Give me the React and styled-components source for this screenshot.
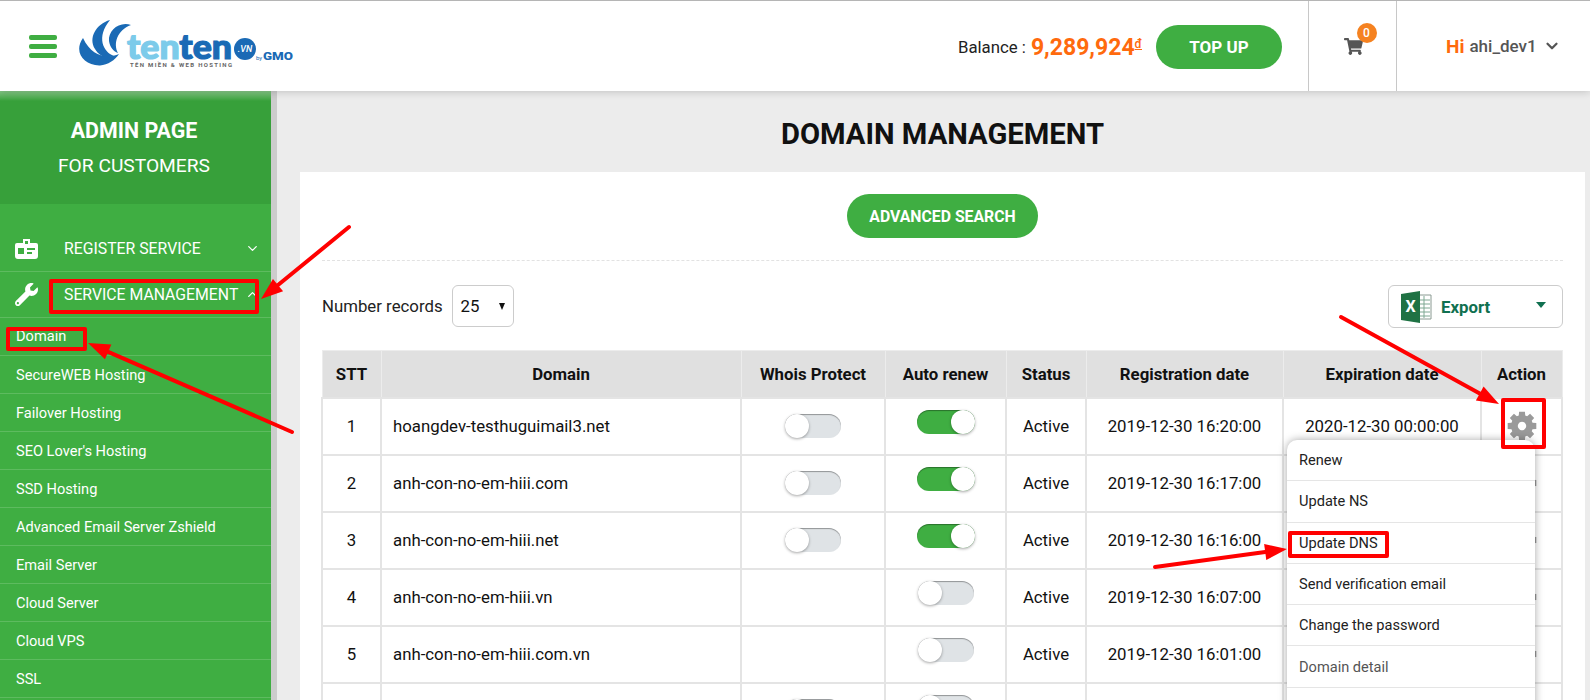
import React from "react";
import styled, { createGlobalStyle } from "styled-components";
import { FaShoppingCart, FaWrench } from "react-icons/fa";
import { FiChevronDown, FiChevronUp } from "react-icons/fi";

const Global = createGlobalStyle`
  html, body { margin: 0; padding: 0; }
  body { font-family: Roboto, "Liberation Sans", sans-serif; color: #111; background: #ececec; }
  * { box-sizing: border-box; }
`;

const Page = styled.div`
  position: relative;
  height: 700px;
  overflow: hidden;
  display: flex;
  flex-direction: column;
`;

/* top bar */
const Topbar = styled.header`
  height: 91px;
  flex: none;
  display: flex;
  align-items: stretch;
  background: #fff;
  border-top: 1px solid #b5b5b5;
  box-shadow: 0 1px 8px rgba(0, 0, 0, 0.18);
  position: relative;
  z-index: 2;
`;
const Burger = styled.div`
  display: flex;
  flex-direction: column;
  justify-content: center;
  gap: 4px;
  margin-left: 29px;
  width: 28px;
`;
const BurgerBar = styled.span`
  height: 5px;
  border-radius: 2px;
  background: #3fae42;
`;
const LogoWrap = styled.div`
  display: flex;
  align-items: center;
  margin-left: 22px;
  padding-bottom: 4px;
`;
const Balance = styled.div`
  margin-left: auto;
  padding-top: 2px;
  display: flex;
  align-items: center;
  font-size: 16.8px;
  color: #222;
`;
const Money = styled.span`
  color: #ff6a0d;
  font-weight: 700;
  font-size: 23px;
  margin-left: 5px;
`;
const Dong = styled.sup`
  color: #ff6a0d;
  font-size: 12px;
  font-weight: 500;
  text-decoration: underline;
  position: relative;
  top: -3px;
  line-height: 0;
`;
const TopUp = styled.button`
  width: 126px;
  height: 44px;
  margin: 0 26px 0 14px;
  border: 0;
  border-radius: 22px;
  background: #3fae42;
  color: #fff;
  font: 700 17px Roboto, sans-serif;
`;
const CartBox = styled.div`
  width: 89px;
  padding-top: 1px;
  border-left: 1px solid #c8c8c8;
  border-right: 1px solid #c8c8c8;
  display: flex;
  align-items: center;
  justify-content: center;
  color: #555;
  font-size: 19px;
`;
const CartIcon = styled.span`
  position: relative;
  display: flex;
  margin-left: 1px;
`;
const Badge = styled.span`
  position: absolute;
  top: -14px;
  left: 13px;
  width: 20px;
  height: 20px;
  border-radius: 50%;
  background: #f58220;
  color: #fff;
  font-size: 12px;
  font-weight: 500;
  display: flex;
  align-items: center;
  justify-content: center;
`;
const UserBox = styled.div`
  flex: 0 0 193px;
  display: flex;
  align-items: center;
  padding-left: 49px;
  color: #555;
  font-weight: 500;
  font-size: 17px;
  svg { font-size: 18px; margin-left: 6px; stroke-width: 3; }
`;
const Hi = styled.span`
  color: #ff6a0d;
  font-weight: 700;
  font-size: 19px;
  margin-right: 5px;
`;

/* body */
const Body = styled.div`
  flex: 1;
  display: flex;
  min-height: 0;
`;
const Sidebar = styled.aside`
  flex: 0 0 277px;
  position: relative;
  background: #3fae42;
  border-right: 6px solid #cccccc;
  color: #fff;
  overflow: hidden;
`;
const Thumb = styled.div`
  position: absolute;
  right: -6px;
  top: 0;
  width: 6px;
  height: 443px;
  background: #7cc67e;
`;
const AdminBlock = styled.div`
  height: 113px;
  padding: 27px 3px 0 0;
  text-align: center;
  background: linear-gradient(#86c887 0, #37a03a 10px);
`;
const AdminTitle = styled.div`
  font-size: 21.4px;
  font-weight: 700;
  line-height: 26px;
`;
const AdminSub = styled.div`
  font-size: 19.2px;
  line-height: 24px;
  margin-top: 10px;
`;
const MainItem = styled.div`
  height: ${(p) => p.$h}px;
  padding-top: ${(p) => p.$pt || 0}px;
  display: flex;
  align-items: center;
  border-bottom: 1px solid #5dbb5f;
  font-size: 15.8px;
`;
const MainIcon = styled.span`
  flex: 0 0 64px;
  padding-left: 15px;
  display: flex;
  font-size: 23px;
`;
const MainLabel = styled.span`
  flex: 1;
`;
const MainCaret = styled.span`
  display: flex;
  font-size: 15px;
  margin-right: 11px;
`;
const SubItem = styled.div`
  height: 38px;
  padding-left: 16px;
  padding-bottom: ${(p) => (p.$first ? "2px" : "0")};
  display: flex;
  align-items: center;
  border-bottom: 1px solid #5dbb5f;
  font-size: 14.6px;
`;

const Main = styled.main`
  flex: 1;
  min-width: 0;
  padding: 0 5px 0 23px;
  background: #ececec;
`;
const Title = styled.h1`
  height: 81px;
  margin: 0;
  padding-top: 4px;
  display: flex;
  align-items: center;
  justify-content: center;
  font-size: 29.2px;
  font-weight: 700;
  color: #111;
`;
const Card = styled.section`
  background: #fff;
  padding: 22px 22px 0;
  height: 600px;
`;
const SearchRow = styled.div`
  display: flex;
  justify-content: center;
  height: 67px;
  border-bottom: 1px dashed #e2e2e2;
`;
const SearchButton = styled.button`
  width: 191px;
  height: 44px;
  border: 0;
  border-radius: 22px;
  background: #3fae42;
  color: #fff;
  font: 700 15.8px Roboto, sans-serif;
`;
const Controls = styled.div`
  height: 89px;
  padding-top: 24px;
  display: flex;
  align-items: flex-start;
  justify-content: space-between;
`;
const RecordsBox = styled.div`
  display: flex;
  align-items: center;
  height: 42px;
  font-size: 16.8px;
  color: #222;
`;
const SelectBox = styled.div`
  width: 62px;
  height: 42px;
  margin-left: 9px;
  padding: 0 8px;
  border: 1px solid #ccc;
  border-radius: 6px;
  display: flex;
  align-items: center;
  justify-content: space-between;
  color: #111;
`;
const SelectCaret = styled.span`
  width: 0;
  height: 0;
  border-left: 3.5px solid transparent;
  border-right: 3.5px solid transparent;
  border-top: 7px solid #111;
`;
const ExportButton = styled.div`
  width: 175px;
  height: 43px;
  padding: 0 16px 0 12px;
  border: 1px solid #ccc;
  border-radius: 6px;
  display: flex;
  align-items: center;
  color: #107050;
  font-weight: 700;
  font-size: 16.8px;
  gap: 9px;
`;
const ExportCaret = styled.span`
  margin-left: auto;
  margin-bottom: 4px;
  width: 0;
  height: 0;
  border-left: 5px solid transparent;
  border-right: 5px solid transparent;
  border-top: 6px solid #107050;
`;

const Table = styled.table`
  width: 1240px;
  margin-left: -1px;
  table-layout: fixed;
  border-collapse: collapse;
  font-size: 16.8px;
`;
const Th = styled.th`
  height: 47px;
  padding: 0;
  background: #e0e0e0;
  border: 1px solid #ececec;
  font-weight: 700;
  color: #111;
`;
const Td = styled.td`
  height: 57px;
  padding: 0 ${(p) => (p.$left ? "11px" : "0")};
  border: 2px solid #e4e4e4;
  text-align: ${(p) => (p.$left ? "left" : "center")};
  color: #111;
  position: relative;
`;
const ToggleTrack = styled.span`
  display: block;
  position: relative;
  width: ${(p) => (p.$on ? 58 : 56)}px;
  height: 24px;
  margin: ${(p) => (p.$raised ? "-9px auto 0" : "0 auto")};
  border-radius: 12px;
  background: ${(p) => (p.$on ? "#3fae42" : "#dfe3e6")};
  box-shadow: inset 0 1px 1px rgba(0, 0, 0, 0.35);
`;
const ToggleKnob = styled.span`
  position: absolute;
  top: 0;
  left: ${(p) => (p.$on ? "34px" : "0")};
  width: 24px;
  height: 24px;
  border-radius: 50%;
  background: #fff;
  box-shadow: 0 1px 3px rgba(0, 0, 0, 0.35);
`;
const GearBox = styled.span`
  display: flex;
  justify-content: center;
`;
const Menu = styled.div`
  position: absolute;
  z-index: 3;
  top: 41.5px;
  right: 26px;
  width: 248px;
  height: 300px;
  background: #fff;
  border-radius: 10px 10px 0 0;
  box-shadow: 0 0 9px rgba(0, 0, 0, 0.35);
  text-align: left;
`;
const MenuItem = styled.div`
  height: 41.3px;
  padding-left: 12px;
  display: flex;
  align-items: center;
  border-bottom: 1px solid #e5e5e5;
  font-size: 14.6px;
  color: ${(p) => (p.$muted ? "#555" : "#222")};
`;
const Annotations = styled.svg`
  position: absolute;
  top: 0;
  left: 0;
  z-index: 5;
  pointer-events: none;
`;

const services = [
  "Domain",
  "SecureWEB Hosting",
  "Failover Hosting",
  "SEO Lover's Hosting",
  "SSD Hosting",
  "Advanced Email Server Zshield",
  "Email Server",
  "Cloud Server",
  "Cloud VPS",
  "SSL",
];

const rows = [
  { n: 1, domain: "hoangdev-testhuguimail3.net", whois: true, renew: true, reg: "2019-12-30 16:20:00", exp: "2020-12-30 00:00:00" },
  { n: 2, domain: "anh-con-no-em-hiii.com", whois: true, renew: true, reg: "2019-12-30 16:17:00" },
  { n: 3, domain: "anh-con-no-em-hiii.net", whois: true, renew: true, reg: "2019-12-30 16:16:00" },
  { n: 4, domain: "anh-con-no-em-hiii.vn", whois: false, renew: false, reg: "2019-12-30 16:07:00" },
  { n: 5, domain: "anh-con-no-em-hiii.com.vn", whois: false, renew: false, reg: "2019-12-30 16:01:00" },
  { n: "", domain: "", whois: true, renew: false, reg: "" },
];

const menuItems = ["Renew", "Update NS", "Update DNS", "Send verification email", "Change the password", "Domain detail"];

const cols = [59, 360, 144, 121, 80, 197, 198, 81];
const heads = ["STT", "Domain", "Whois Protect", "Auto renew", "Status", "Registration date", "Expiration date", "Action"];

function Logo() {
  return (
    <svg width="215" height="48" viewBox="79 18 215 48">
      <path fill="#1a6ab5" d="M83 36C73 50 84 64 100 63.5C108 63 115 58 119 52C107 57 92 55 83 36Z" />
      <path fill="#1a6ab5" d="M110 18C96 22 88 36 95 47C99 54 106 57 114 54C103 50 96 35 110 18Z" />
      <path fill="#1a6ab5" d="M131 23C119 19 108 29 109 39C110 45 113 49 118 51C113 42 117 28 131 23Z" />
      <text x="127" y="57" fontFamily="Lato, Roboto, sans-serif" fontWeight="900" fontSize="34" strokeWidth="1.2" textLength="105" lengthAdjust="spacingAndGlyphs">
        <tspan fill="#7ccbea" stroke="#7ccbea">ten</tspan>
        <tspan fill="#1a6ab5" stroke="#1a6ab5">ten</tspan>
      </text>
      <circle cx="245" cy="47" r="11" fill="#1a6ab5" />
      <text x="245" y="50" textAnchor="middle" fill="#fff" fontFamily="Roboto, sans-serif" fontWeight="500" fontSize="9" fontStyle="italic">.VN</text>
      <text x="256" y="58" fill="#1a6ab5" fontFamily="Roboto, sans-serif" fontSize="6">by</text>
      <text x="263" y="58" fill="#1a6ab5" fontFamily="Roboto, sans-serif" fontWeight="900" fontSize="10" textLength="30" lengthAdjust="spacingAndGlyphs">GMO</text>
      <text x="130" y="65" fill="#666" fontFamily="Roboto, sans-serif" fontWeight="700" fontSize="6" textLength="102">TÊN MIỀN & WEB HOSTING</text>
    </svg>
  );
}

function IdCard() {
  return (
    <svg width="23" height="20" viewBox="0 0 23 20">
      <path fill="#fff" fillRule="evenodd" d="M8 0h7v4h6a2 2 0 0 1 2 2v11a3 3 0 0 1-3 3H3a3 3 0 0 1-3-3V6a2 2 0 0 1 2-2h6ZM3 9v6h6V9Zm9 0v2h8V9Zm0 4v2h5v-2ZM10 2v3h3V2Z" />
    </svg>
  );
}

function ExcelIcon() {
  return (
    <svg width="31" height="32" viewBox="0 0 31 32">
      <path fill="#fff" stroke="#8a9a92" strokeWidth="1" d="M16 4h14v24H16Z" />
      <path stroke="#7fa893" strokeWidth="1" d="M17 9h12M17 13h12M17 17h12M17 21h12M17 25h12M23 5v22" />
      <path fill="#1f7244" d="M0 3 19 0v32L0 29Z" />
      <text x="9.5" y="21" textAnchor="middle" fill="#fff" fontFamily="Roboto, sans-serif" fontWeight="700" fontSize="16">X</text>
    </svg>
  );
}

// eight blunt teeth with a hole, the shape of the old font-awesome cog
function gearPath() {
  const pts = [];
  for (let i = 0; i < 8; i++) {
    const a = (i * Math.PI) / 4;
    [[-0.3, 11], [-0.2, 14.6], [0.2, 14.6], [0.3, 11]].forEach(([d, r]) => {
      pts.push(`${(15 + Math.sin(a + d) * r).toFixed(2)} ${(15 - Math.cos(a + d) * r).toFixed(2)}`);
    });
  }
  return `M${pts.join("L")}Z M15 10.8a4.2 4.2 0 1 0 .01 0Z`;
}

function Gear() {
  return (
    <svg width="30" height="30" viewBox="0 0 30 30">
      <path fill="#9a9a9a" fillRule="evenodd" d={gearPath()} />
    </svg>
  );
}

function Arrow({ x1, y1, x2, y2 }) {
  const a = Math.atan2(y2 - y1, x2 - x1);
  const bx = x2 - Math.cos(a) * 22;
  const by = y2 - Math.sin(a) * 22;
  const px = -Math.sin(a) * 8;
  const py = Math.cos(a) * 8;
  return (
    <g>
      <line x1={x1} y1={y1} x2={bx} y2={by} stroke="#f00" strokeWidth="4" strokeLinecap="round" />
      <polygon fill="#f00" points={`${x2},${y2} ${bx + px},${by + py} ${bx - px},${by - py}`} />
    </g>
  );
}

function Toggle({ on, raised }) {
  return (
    <ToggleTrack $on={on} $raised={raised}>
      <ToggleKnob $on={on} />
    </ToggleTrack>
  );
}

export default function App() {
  return (
    <Page>
      <Global />
      <Topbar>
        <Burger><BurgerBar /><BurgerBar /><BurgerBar /></Burger>
        <LogoWrap><Logo /></LogoWrap>
        <Balance>
          Balance :<Money>9,289,924</Money><Dong>đ</Dong>
          <TopUp>TOP UP</TopUp>
        </Balance>
        <CartBox>
          <CartIcon>
            <FaShoppingCart />
            <Badge>0</Badge>
          </CartIcon>
        </CartBox>
        <UserBox>
          <Hi>Hi</Hi> ahi_dev1 <FiChevronDown />
        </UserBox>
      </Topbar>
      <Body>
        <Sidebar>
          <Thumb />
          <AdminBlock>
            <AdminTitle>ADMIN PAGE</AdminTitle>
            <AdminSub>FOR CUSTOMERS</AdminSub>
          </AdminBlock>
          <MainItem $h={68} $pt={22}>
            <MainIcon><IdCard /></MainIcon>
            <MainLabel>REGISTER SERVICE</MainLabel>
            <MainCaret><FiChevronDown /></MainCaret>
          </MainItem>
          <MainItem $h={46}>
            <MainIcon><FaWrench /></MainIcon>
            <MainLabel>SERVICE MANAGEMENT</MainLabel>
            <MainCaret><FiChevronUp /></MainCaret>
          </MainItem>
          {services.map((s, i) => (
            <SubItem key={s} $first={i === 0}>{s}</SubItem>
          ))}
        </Sidebar>
        <Main>
          <Title>DOMAIN MANAGEMENT</Title>
          <Card>
            <SearchRow>
              <SearchButton>ADVANCED SEARCH</SearchButton>
            </SearchRow>
            <Controls>
              <RecordsBox>
                Number records
                <SelectBox>25<SelectCaret /></SelectBox>
              </RecordsBox>
              <ExportButton>
                <ExcelIcon />
                Export
                <ExportCaret />
              </ExportButton>
            </Controls>
            <Table>
              <colgroup>
                {cols.map((w, i) => (
                  <col key={i} width={w} />
                ))}
              </colgroup>
              <thead>
                <tr>
                  {heads.map((h) => (
                    <Th key={h}>{h}</Th>
                  ))}
                </tr>
              </thead>
              <tbody>
                {rows.map((r, i) => (
                  <tr key={i}>
                    <Td>{r.n}</Td>
                    <Td $left>{r.domain}</Td>
                    <Td>{r.whois && <Toggle />}</Td>
                    <Td><Toggle on={i < 3} raised /></Td>
                    <Td>{r.domain && "Active"}</Td>
                    <Td>{r.reg}</Td>
                    <Td>{r.exp}</Td>
                    <Td>
                      <GearBox><Gear /></GearBox>
                      {i === 0 && (
                        <Menu>
                          {menuItems.map((m) => (
                            <MenuItem key={m} $muted={m === "Domain detail"}>{m}</MenuItem>
                          ))}
                        </Menu>
                      )}
                    </Td>
                  </tr>
                ))}
              </tbody>
            </Table>
          </Card>
        </Main>
      </Body>
      <Annotations width="1590" height="700">
        <g fill="none" stroke="#f00" strokeWidth="4" strokeLinejoin="round">
          <rect x="51" y="281" width="206" height="31" />
          <rect x="8" y="329" width="77" height="20" />
          <rect x="1503" y="400" width="41" height="47" />
          <rect x="1290" y="533" width="97" height="23" />
        </g>
        <Arrow x1={349} y1={227} x2={261} y2={299} />
        <Arrow x1={292} y1={432} x2={88} y2={343} />
        <Arrow x1={1341} y1={317} x2={1499} y2={404} />
        <Arrow x1={1155} y1={567} x2={1287} y2={549} />
      </Annotations>
    </Page>
  );
}
